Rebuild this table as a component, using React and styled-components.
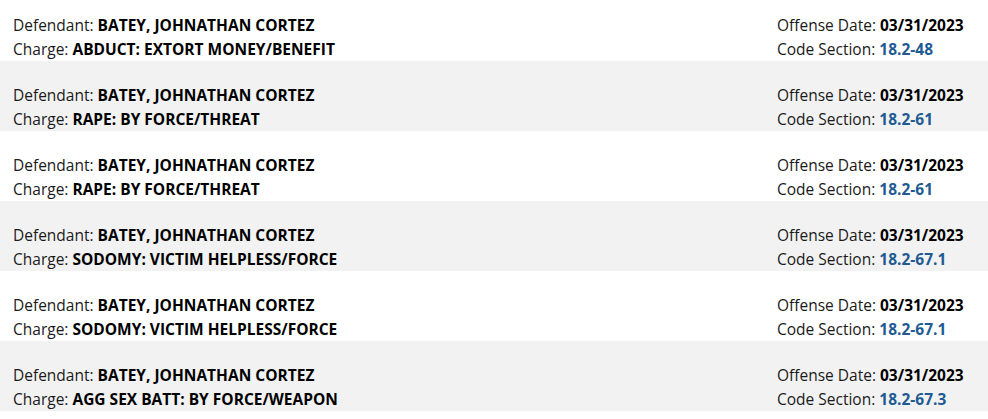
import React from "react";
import styled, { createGlobalStyle } from "styled-components";

const Global = createGlobalStyle`
  html, body { margin: 0; padding: 0; background: #ffffff; }
  body { font-family: "Open Sans", "Noto Sans", Arial, sans-serif; color: #111; overflow: hidden; }
`;

const List = styled.div`
  margin-top: -9px;
  display: flex;
  flex-direction: column;
`;

const Row = styled.div`
  height: 70px;
  box-sizing: border-box;
  display: grid;
  grid-template-columns: 1fr 211px;
  align-content: end;
  padding: 0 0 0 13px;
  background: ${(p) => (p.$shaded ? "#f2f2f2" : "#ffffff")};
`;

const Col = styled.div`
  display: flex;
  flex-direction: column;
`;

const Line = styled.div`
  font-size: 15.5px;
  line-height: 23.5px;
  color: #1a1a1a;
  white-space: nowrap;
`;

const Value = styled.span`
  font-weight: 700;
  color: ${(p) => (p.$link ? "#1f5b93" : "#000000")};
`;

const rows = [
  ["ABDUCT: EXTORT MONEY/BENEFIT", "18.2-48"],
  ["RAPE: BY FORCE/THREAT", "18.2-61"],
  ["RAPE: BY FORCE/THREAT", "18.2-61"],
  ["SODOMY: VICTIM HELPLESS/FORCE", "18.2-67.1"],
  ["SODOMY: VICTIM HELPLESS/FORCE", "18.2-67.1"],
  ["AGG SEX BATT: BY FORCE/WEAPON", "18.2-67.3"],
];

export default function App() {
  return (
    <>
      <Global />
      <List>
        {rows.map(([charge, code], i) => (
          <Row key={i} $shaded={i % 2 === 1}>
            <Col>
              <Line>
                Defendant: <Value>BATEY, JOHNATHAN CORTEZ</Value>
              </Line>
              <Line>
                Charge: <Value>{charge}</Value>
              </Line>
            </Col>
            <Col>
              <Line>
                Offense Date: <Value>03/31/2023</Value>
              </Line>
              <Line>
                Code Section: <Value $link>{code}</Value>
              </Line>
            </Col>
          </Row>
        ))}
      </List>
    </>
  );
}
